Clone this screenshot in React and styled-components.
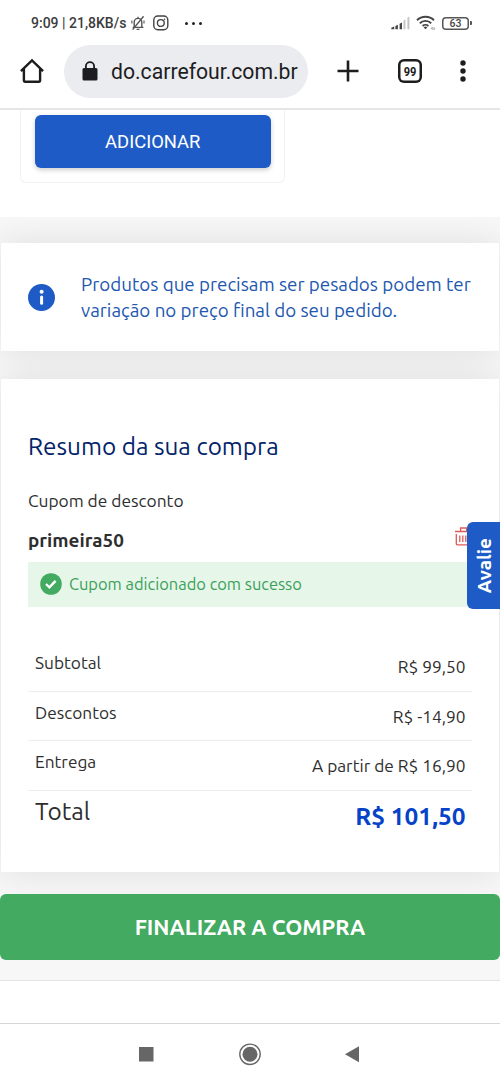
import React from "react";
import styled, { createGlobalStyle } from "styled-components";

const totals = [
  { label: "Subtotal", value: "R$ 99,50" },
  { label: "Descontos", value: "R$ -14,90" },
  { label: "Entrega", value: "A partir de R$ 16,90" },
];

const MutedBell = () => (
  <svg width="16" height="16" viewBox="0 0 16 16" fill="none" stroke="#555" strokeWidth="1.4">
    <path d="M2.8 12.4h10.6M4.2 12V7.2a3.8 3.8 0 0 1 7.6 0V12M6.6 14.4h2.8M8 3.4V1.8" />
    <path d="M1.9 5.4v3.2M14 5.4v3.2" strokeWidth="1.1" />
    <path d="M2.6 14.6 13.6 1.2" />
  </svg>
);

const Instagram = () => (
  <svg width="16" height="16" viewBox="0 0 16 16" fill="none" stroke="#444" strokeWidth="1.4">
    <rect x=".8" y="1" width="14" height="13.8" rx="4" />
    <circle cx="7.8" cy="8" r="3.4" />
    <circle cx="11.6" cy="4.3" r=".5" fill="#444" strokeWidth=".6" />
  </svg>
);

const Signal = () => (
  <svg width="19" height="14" viewBox="0 0 19 14">
    <path d="M.3 13.3v-1.6l2.9-1.3v2.9zM4.4 9.9l2.5-1.2v4.6H4.4zM8.6 7.7l2.4-1.3v6.9H8.6z" fill="#444" />
    <path d="M12.5 4.6 14.4 3.4v9.9h-1.9zM16.4 1.8 18.4.5v12.8h-2z" fill="#c4c4c4" />
  </svg>
);

const Wifi = () => (
  <svg width="20" height="16" viewBox="0 0 20 16" fill="none" stroke="#444" strokeWidth="1.9">
    <path d="M1 5.2a12.3 12.3 0 0 1 17 0M3.8 8.2a8.2 8.2 0 0 1 11.4 0M6.6 11a4.2 4.2 0 0 1 5.8 0" />
    <path d="m9.5 14.2-1.8-1.8a2.6 2.6 0 0 1 3.6 0z" fill="#444" stroke="none" />
    <path d="m15 14 1.3-1.8v2.7M18 12.1v2.7l1.1-1.6" stroke="#999" strokeWidth=".8" />
  </svg>
);

const Home = () => (
  <svg width="26" height="26" viewBox="0 0 26 26" fill="none" stroke="#1d1d1f" strokeWidth="2.4">
    <path d="M1.9 13.1 13 2.3l11.1 10.8M4.9 10.6v12.2q0 .9.9.9h14.4q.9 0 .9-.9V10.6" />
  </svg>
);

const Lock = () => (
  <svg width="16" height="20" viewBox="0 0 16 20">
    <path d="M3.9 8V5.3a4.1 4.1 0 0 1 8.2 0V8" fill="none" stroke="#1d1d1f" strokeWidth="1.8" />
    <rect x=".5" y="7" width="15" height="12.4" rx="1.5" fill="#1d1d1f" />
  </svg>
);

const Plus = () => (
  <svg width="22" height="22" viewBox="0 0 22 22" stroke="#1d1d1f" strokeWidth="2.6">
    <path d="M11 .5v21M.5 11h21" />
  </svg>
);

const Dots = () => (
  <svg width="6" height="22" viewBox="0 0 6 22" fill="#1d1d1f">
    <circle cx="3" cy="3" r="2.7" />
    <circle cx="3" cy="11" r="2.7" />
    <circle cx="3" cy="19" r="2.7" />
  </svg>
);

const Info = () => (
  <svg width="27" height="27" viewBox="0 0 27 27">
    <circle cx="13.5" cy="13.5" r="13.5" fill="#1e5bc6" />
    <circle cx="13.6" cy="7.8" r="2" fill="#fff" />
    <rect x="12.1" y="11.5" width="3" height="9.3" rx="1.5" fill="#fff" />
  </svg>
);

const Check = () => (
  <svg width="22" height="22" viewBox="0 0 22 22">
    <circle cx="11" cy="11" r="10.8" fill="#43aa61" />
    <path d="m6 11 3.4 3.3 6.2-6.5" fill="none" stroke="#fff" strokeWidth="2.4" />
  </svg>
);

const Trash = () => (
  <svg width="17" height="20" viewBox="0 0 17 20" fill="none" stroke="#df5a55" strokeWidth="1.3">
    <path d="M0 5.5h17M5.6 5.3V2h6v3.3M1.3 8v9.8q0 1 1 1h12.4q1 0 1-1V8M4.8 9.4v6.6M7.8 9.4v6.6M10.8 9.4v6.6" />
  </svg>
);

const App = () => {
  return (
    <>
      <GlobalStyle />
      <Screen>
        <StatusBar>
          <Clock>9:09 | 21,8KB/s</Clock>
          <StatusIcons>
            <MutedBell />
            <Instagram />
          </StatusIcons>
          <More>
            <i />
            <i />
            <i />
          </More>
          <StatusRight>
            <Signal />
            <Wifi />
            <Battery>63</Battery>
          </StatusRight>
        </StatusBar>

        <Toolbar>
          <Home />
          <Address>
            <Lock />
            <span>do.carrefour.com.br</span>
          </Address>
          <Actions>
            <Plus />
            <TabCount>
              <span>99</span>
            </TabCount>
            <Dots />
          </Actions>
        </Toolbar>

        <Products>
          <ProductCard>
            <AddButton>ADICIONAR</AddButton>
          </ProductCard>
        </Products>

        <Cart>
          <Notice>
            <Info />
            <NoticeText>
              Produtos que precisam ser pesados podem ter
              <br />
              variação no preço final do seu pedido.
            </NoticeText>
          </Notice>

          <Summary>
            <Title>Resumo da sua compra</Title>
            <CouponLabel>Cupom de desconto</CouponLabel>
            <CouponRow>
              <Coupon>primeira50</Coupon>
              <Trash />
            </CouponRow>
            <Success>
              <Check />
              <span>Cupom adicionado com sucesso</span>
            </Success>
            <Rows>
              {totals.map((item) => (
                <Row key={item.label}>
                  <Label>{item.label}</Label>
                  <Value>{item.value}</Value>
                </Row>
              ))}
              <TotalRow>
                <TotalLabel>Total</TotalLabel>
                <TotalValue>R$ 101,50</TotalValue>
              </TotalRow>
            </Rows>
            <Feedback>
              <span>Avalie</span>
            </Feedback>
          </Summary>

          <Checkout>FINALIZAR A COMPRA</Checkout>
        </Cart>

        <Footer />

        <NavBar>
          <svg width="222" height="24" viewBox="0 0 222 24" fill="#666">
            <rect x="0" y="5" width="14.5" height="14.5" />
            <circle cx="111" cy="12.3" r="10.2" fill="none" stroke="#666" strokeWidth="1.4" />
            <circle cx="111" cy="12.3" r="7.5" />
            <path d="M206 12.3 220 4.3v16z" />
          </svg>
        </NavBar>
      </Screen>
    </>
  );
};

const GlobalStyle = createGlobalStyle`
  * {
    box-sizing: border-box;
  }
  body {
    margin: 0;
    background: #fff;
    font-family: "Ubuntu", "Noto Sans", sans-serif;
    color: #2e2e2e;
  }
  svg {
    display: block;
    flex: none;
  }
  button {
    border: none;
    font-family: inherit;
    padding: 0;
  }
`;

const Screen = styled.div`
  width: 500px;
  height: 1083px;
  overflow: hidden;
  display: flex;
  flex-direction: column;
`;

const StatusBar = styled.header`
  height: 44px;
  flex: none;
  display: flex;
  align-items: center;
  padding: 2px 31px 0 31px;
  font-family: Roboto, sans-serif;
`;

const Clock = styled.span`
  width: 99px;
  font-size: 14px;
  font-weight: 500;
  color: #3c3c3c;
  white-space: nowrap;
`;

const StatusIcons = styled.div`
  display: flex;
  gap: 7px;
`;

const More = styled.div`
  display: flex;
  gap: 4px;
  margin-left: 16px;
  i {
    width: 3px;
    height: 3px;
    border-radius: 50%;
    background: #222;
  }
`;

const StatusRight = styled.div`
  display: flex;
  align-items: center;
  gap: 6px;
  margin-left: auto;
`;

const Battery = styled.div`
  position: relative;
  width: 27px;
  height: 13px;
  border-radius: 4px;
  box-shadow: inset 0 0 0 1.5px #555;
  font-size: 10.5px;
  font-weight: 500;
  line-height: 14px;
  text-align: center;
  color: #444;
  &::after {
    content: "";
    position: absolute;
    right: -2.5px;
    top: 4.5px;
    width: 2px;
    height: 4px;
    border-radius: 0 1px 1px 0;
    background: #555;
  }
`;

const Toolbar = styled.div`
  height: 66px;
  flex: none;
  display: flex;
  align-items: center;
  padding: 0 0 10px 19px;
  border-bottom: 2px solid #e6e6e6;
`;

const Address = styled.div`
  display: flex;
  align-items: center;
  width: 244px;
  height: 53px;
  margin-left: 19px;
  padding-left: 18px;
  border-radius: 27px;
  background: #ebecf0;
  font-family: Roboto, sans-serif;
  font-size: 21.2px;
  color: #1d1d1f;
  span {
    margin-left: 13px;
    white-space: nowrap;
  }
`;

const Actions = styled.div`
  display: flex;
  align-items: center;
  margin-left: 29px;
  svg:last-child {
    margin-left: 38px;
  }
`;

const TabCount = styled.div`
  width: 24px;
  height: 24px;
  margin-left: 38.5px;
  border-radius: 6px;
  box-shadow: inset 0 0 0 2.5px #1d1d1f;
  font: 700 13.5px/24px Roboto, sans-serif;
  text-align: center;
  color: #1d1d1f;
  span {
    display: block;
    transform: scaleX(0.82);
  }
`;

const Products = styled.section`
  height: 107px;
  flex: none;
  padding-left: 20px;
`;

const ProductCard = styled.div`
  width: 265px;
  height: 73px;
  padding: 5px 14px 0;
  border: 1px solid #f1f1f1;
  border-top: none;
  border-radius: 0 0 6px 6px;
`;

const AddButton = styled.button`
  display: block;
  width: 235.5px;
  height: 53px;
  border-radius: 6px;
  background: #1e5bc6;
  box-shadow: 0 2px 5px rgba(0, 0, 0, 0.2);
  color: #fff;
  font-family: Roboto, sans-serif;
  font-size: 18.4px;
`;

const Cart = styled.main`
  height: 763px;
  flex: none;
  padding-top: 26px;
  background: #f7f7f7;
  overflow: hidden;
`;

const Panel = styled.section`
  margin: 0 1px;
  background: #fff;
  box-shadow: 0 0 36px rgba(0, 0, 0, 0.1);
`;

const Notice = styled(Panel)`
  display: flex;
  align-items: center;
  height: 108px;
  padding-left: 27px;
`;

const NoticeText = styled.p`
  margin: 0 0 0 26px;
  padding-top: 2px;
  font-size: 18.76px;
  line-height: 26.3px;
  color: #2257b0;
  white-space: nowrap;
`;

const Summary = styled(Panel)`
  position: relative;
  height: 493px;
  margin-top: 28px;
  padding: 51px 27px 0;
`;

const Title = styled.h2`
  margin: 0;
  font-size: 24.3px;
  font-weight: 400;
  line-height: 32px;
  color: #03236a;
`;

const CouponLabel = styled.p`
  margin: 25px 0 0;
  font-size: 17.35px;
  line-height: 27px;
`;

const CouponRow = styled.div`
  display: flex;
  justify-content: space-between;
  height: 48px;
  padding-top: 12px;
`;

const Coupon = styled.strong`
  font-size: 18.9px;
  line-height: 29px;
`;

const Success = styled.div`
  display: flex;
  align-items: center;
  gap: 7px;
  height: 45px;
  padding: 0 0 1px 12px;
  background: #e6f6e9;
  color: #3ba05a;
  font-size: 16.45px;
`;

const Rows = styled.div`
  margin-top: 35px;
`;

const Row = styled.div`
  display: flex;
  justify-content: space-between;
  height: 49.5px;
  padding: 8px 6.5px 0 7px;
  border-bottom: 1px solid #ededed;
  line-height: 26px;
`;

const Label = styled.span`
  font-size: 17.3px;
`;

const Value = styled.span`
  padding-top: 4px;
  font-size: 17.3px;
`;

const TotalRow = styled.div`
  display: flex;
  justify-content: space-between;
  padding: 4px 6.5px 0 7px;
  line-height: 32px;
`;

const TotalLabel = styled.span`
  font-size: 24.4px;
`;

const TotalValue = styled.strong`
  padding-top: 5px;
  font-size: 24.4px;
  color: #0643c8;
`;

const Feedback = styled.aside`
  position: absolute;
  right: -1px;
  top: 143px;
  display: flex;
  align-items: center;
  justify-content: center;
  width: 33px;
  height: 87px;
  border-radius: 6px 0 0 6px;
  background: #1e5bc6;
  color: #fff;
  font-size: 19px;
  font-weight: 700;
  span {
    writing-mode: vertical-rl;
    transform: rotate(180deg);
  }
`;

const Checkout = styled.button`
  position: relative;
  display: block;
  width: 100%;
  height: 66.5px;
  margin-top: 21.5px;
  border-radius: 6px;
  background: #43aa61;
  color: #fff;
  font-size: 21.7px;
  font-weight: 700;
`;

const Footer = styled.div`
  height: 44px;
  flex: none;
  border-top: 1px solid #e4e4e4;
  border-bottom: 1px solid #d6d6d6;
`;

const NavBar = styled.nav`
  flex: 1;
  padding: 18px 0 0 139px;
`;

export default App;
